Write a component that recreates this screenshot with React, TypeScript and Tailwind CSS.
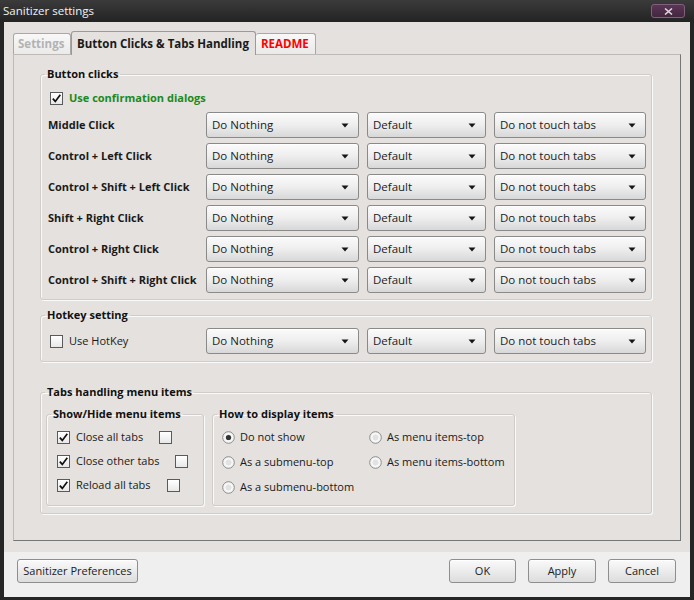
import React from "react";

const clickRows = [
  "Middle Click",
  "Control + Left Click",
  "Control + Shift + Left Click",
  "Shift + Right Click",
  "Control + Right Click",
  "Control + Shift + Right Click",
];

const menuItems = [
  { label: "Close all tabs", gap: "ml-[16px]" },
  { label: "Close other tabs", gap: "ml-[16px]" },
  { label: "Reload all tabs", gap: "ml-[16px]" },
];

function Arrow() {
  return (
    <svg width="8" height="5" viewBox="0 0 8 5">
      <path d="M0.5 0.5 H7.5 L4 4.5 Z" fill="#151515" />
    </svg>
  );
}

function Select({ value, className }: { value: string; className: string }) {
  return (
    <div
      className={`flex h-[26px] items-center justify-between rounded-[3px] border border-[#8a8a8a] bg-linear-to-b from-[#fbfbfb] via-[#eeeeee] to-[#d8d8d8] pl-[5px] pr-[9px] text-[11.5px] text-[#1c1c1c] shadow-[inset_0_1px_0_#ffffff] ${className}`}
    >
      <span>{value}</span>
      <Arrow />
    </div>
  );
}

function SelectTriple() {
  return (
    <>
      <Select value="Do Nothing" className="w-[153px]" />
      <Select value="Default" className="w-[119px]" />
      <Select value="Do not touch tabs" className="w-[152px]" />
    </>
  );
}

function Checkbox({ checked = false }: { checked?: boolean }) {
  return (
    <div className="flex h-[13px] w-[13px] shrink-0 items-center justify-center border border-[#5a5a5a] bg-linear-to-b from-[#ffffff] to-[#e8e8e8]">
      {checked && (
        <svg width="11" height="11" viewBox="0 0 11 11">
          <path d="M1.8 5.6 L4.3 8.4 L9.3 1.8" fill="none" stroke="#101010" strokeWidth="1.7" />
        </svg>
      )}
    </div>
  );
}

function Radio({ checked = false }: { checked?: boolean }) {
  return (
    <svg width="13" height="13" viewBox="0 0 13 13" className="shrink-0">
      <circle cx="6.5" cy="6.5" r="5.8" fill="#f4f4f4" stroke="#8c8c8c" strokeWidth="1" />
      <circle cx="6.5" cy="6.5" r="3.6" fill="#e2e2e2" stroke="#ffffff" strokeWidth="0.8" />
      {checked && <circle cx="6.5" cy="6.5" r="2.6" fill="#333333" />}
    </svg>
  );
}

function Group({
  title,
  className,
  legendClass,
  children,
}: {
  title: string;
  className: string;
  legendClass: string;
  children: React.ReactNode;
}) {
  return (
    <fieldset
      className={`min-w-0 rounded-[3px] border border-[#cfccc9] shadow-[inset_1px_1px_0_#fafafa,1px_1px_0_#fafafa] ${className}`}
    >
      <legend className={`whitespace-nowrap px-[2px] text-[11px] font-bold leading-[16px] text-[#111111] ${legendClass}`}>
        {title}
      </legend>
      {children}
    </fieldset>
  );
}

function Button({ label, className }: { label: string; className: string }) {
  return (
    <div
      className={`flex h-[24px] items-center justify-center rounded-[3px] border border-[#8e8e8e] bg-linear-to-b from-[#fafafa] to-[#dddddd] text-[11px] text-[#222222] shadow-[inset_0_1px_0_#ffffff] ${className}`}
    >
      {label}
    </div>
  );
}

export default function App() {
  return (
    <div className="flex h-[600px] w-[694px] flex-col bg-[#252525] font-['Open_Sans',sans-serif] text-[11px] text-[#1a1a1a]">
      {/* title bar */}
      <div className="flex h-[22px] shrink-0 items-center justify-between bg-linear-to-b from-[#3b3b3b] to-[#232323] pl-[3px] pr-[9px]">
        <span className="text-[11.5px] text-[#f2f2f2]">Sanitizer settings</span>
        <div className="flex h-[14px] w-[34px] items-center justify-center rounded-[3px] border border-[#80607c] bg-linear-to-b from-[#5a3656] to-[#43263f]">
          <svg width="9" height="7" viewBox="0 0 9 7">
            <path d="M1 0.5 L8 6.5 M8 0.5 L1 6.5" stroke="#ddd3da" strokeWidth="1.6" />
          </svg>
        </div>
      </div>

      <div className="mx-[4px] mb-[3px] flex flex-1 flex-col">
        {/* tabbed area */}
        <div className="flex h-[530px] flex-col bg-[#e4e1de] px-[9px] pb-[11px] pt-[9px]">
          <div className="flex h-[23px] items-end">
            <div className="flex h-[21px] w-[58px] items-center rounded-t-[3px] border border-b-0 border-[#aaa7a4] bg-linear-to-b from-[#f8f8f8] to-[#ebeae9] pl-[4px] text-[11.5px] font-bold text-[#b3b3b3]">
              Settings
            </div>
            <div className="relative z-10 -mb-[1px] flex h-[24px] w-[185px] items-center rounded-t-[3px] border border-b-0 border-[#9c9996] bg-[#e4e1de] pl-[5px] text-[11.5px] font-bold text-[#1a1a1a]">
              Button Clicks &amp; Tabs Handling
            </div>
            <div className="flex h-[21px] w-[60px] items-center rounded-t-[3px] border border-b-0 border-l-0 border-[#aaa7a4] bg-linear-to-b from-[#f8f8f8] to-[#ebeae9] pl-[5px] text-[11.5px] font-bold text-[#ff0000]">
              README
            </div>
          </div>

          <div className="flex flex-1 flex-col border border-b-[#767676] border-l-[#bdbab7] border-r-[#767676] border-t-[#bdbab7] pl-[26px] pr-[28px] pt-[11px]">
            <Group title="Button clicks" className="pb-[6px] pl-[7px] pr-[5px]" legendClass="-ml-[3px]">
              <div className="mt-[8px] flex h-[16px] items-center pl-[2px]">
                <Checkbox checked />
                <span className="ml-[6px] font-bold text-[#1b8a1b]">Use confirmation dialogs</span>
              </div>
              <div className="mt-[6px] grid grid-cols-[150px_153px_119px_152px] gap-x-[8px] gap-y-[5px]">
                {clickRows.map((row) => (
                  <React.Fragment key={row}>
                    <div className="flex items-center whitespace-nowrap font-bold">{row}</div>
                    <SelectTriple />
                  </React.Fragment>
                ))}
              </div>
            </Group>

            <Group title="Hotkey setting" className="mt-[7px] pb-[7px] pl-[7px] pr-[5px]" legendClass="-ml-[3px]">
              <div className="mt-[5px] grid grid-cols-[150px_153px_119px_152px] gap-x-[8px]">
                <div className="flex items-center pl-[2px]">
                  <Checkbox />
                  <span className="ml-[6px]">Use HotKey</span>
                </div>
                <SelectTriple />
              </div>
            </Group>

            <Group title="Tabs handling menu items" className="mt-[22px] pb-[7px] pl-[5px] pr-[5px]" legendClass="-ml-[1px]">
              <div className="mt-[6px] flex gap-[8px]">
                <Group title="Show/Hide menu items" className="w-[158px] pb-[10px] pl-[10px]" legendClass="-ml-[6px]">
                  <div className="mt-[7px] flex flex-col gap-[8px]">
                    {menuItems.map((item) => (
                      <div key={item.label} className="flex h-[16px] items-center">
                        <Checkbox checked />
                        <span className="ml-[6px]">{item.label}</span>
                        <div className={item.gap}>
                          <Checkbox />
                        </div>
                      </div>
                    ))}
                  </div>
                </Group>

                <Group title="How to display items" className="w-[303px] pb-[10px] pl-[9px]" legendClass="-ml-[5px]">
                  <div className="mt-[7px] grid grid-cols-[147px_auto] gap-y-[9px]">
                    <div className="flex h-[16px] items-center">
                      <Radio checked />
                      <span className="ml-[5px]">Do not show</span>
                    </div>
                    <div className="flex h-[16px] items-center">
                      <Radio />
                      <span className="ml-[5px]">As menu items-top</span>
                    </div>
                    <div className="flex h-[16px] items-center">
                      <Radio />
                      <span className="ml-[5px]">As a submenu-top</span>
                    </div>
                    <div className="flex h-[16px] items-center">
                      <Radio />
                      <span className="ml-[5px]">As menu items-bottom</span>
                    </div>
                    <div className="flex h-[16px] items-center">
                      <Radio />
                      <span className="ml-[5px]">As a submenu-bottom</span>
                    </div>
                  </div>
                </Group>
              </div>
            </Group>
          </div>
        </div>

        {/* button bar */}
        <div className="flex flex-1 items-start justify-between bg-[#efefef] pl-[13px] pr-[14px] pt-[7px]">
          <Button label="Sanitizer Preferences" className="w-[121px]" />
          <div className="flex gap-[12px]">
            <Button label="OK" className="w-[67px]" />
            <Button label="Apply" className="w-[68px]" />
            <Button label="Cancel" className="w-[68px]" />
          </div>
        </div>
      </div>
    </div>
  );
}
